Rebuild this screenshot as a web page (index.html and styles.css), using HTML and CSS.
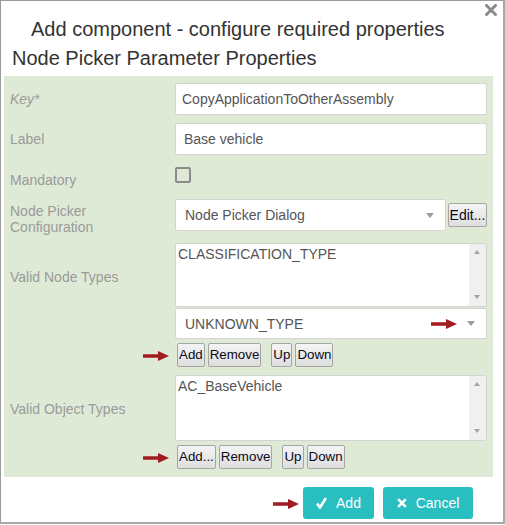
FILE: index.html
```html
<!DOCTYPE html>
<html>
<head>
<meta charset="utf-8">
<link rel="stylesheet" href="styles.css">
</head>
<body>
<div class="dialog">
  <span class="close"><svg width="12" height="12" viewBox="0 0 12 12"><path d="M1.5 1.5 L10.5 10.5 M10.5 1.5 L1.5 10.5" stroke="#8a8a8a" stroke-width="3" stroke-linecap="square"/></svg></span>
  <h2 class="title">Add component - configure required properties</h2>
  <h3 class="subtitle">Node Picker Parameter Properties</h3>
  <div class="panel">
    <div class="row">
      <div class="lbl key">Key*</div>
      <div class="input">CopyApplicationToOtherAssembly</div>
    </div>
    <div class="row">
      <div class="lbl">Label</div>
      <div class="input pad">Base vehicle</div>
    </div>
    <div class="row row-check">
      <div class="lbl">Mandatory</div>
      <div class="ctl"><span class="checkbox"></span></div>
    </div>
    <div class="row row-picker">
      <div class="lbl">Node Picker<br>Configuration</div>
      <div class="ctl picker">
        <div class="select small"><span>Node Picker Dialog</span><span class="caret"></span></div>
        <button class="btn edit">Edit...</button>
      </div>
    </div>
    <div class="row row-list">
      <div class="lbl lbl-list">Valid Node Types</div>
      <div class="ctl">
        <div class="textarea t1"><span class="ta-text">CLASSIFICATION_TYPE</span><span class="sb"><span class="up"></span><span class="down"></span></span></div>
        <div class="select wide"><span>UNKNOWN_TYPE</span><span class="marker m-select"><svg width="26" height="10" viewBox="0 0 26 10"><path d="M0 3.2 H15 V0 L26 5 L15 10 V6.8 H0 Z" fill="#a11c1f"/></svg></span><span class="caret"></span></div>
        <div class="btnrow">
          <span class="marker m-left"><svg width="26" height="10" viewBox="0 0 26 10"><path d="M0 3.2 H15 V0 L26 5 L15 10 V6.8 H0 Z" fill="#a11c1f"/></svg></span>
          <button class="btn">Add</button><button class="btn">Remove</button><button class="btn sep">Up</button><button class="btn">Down</button>
        </div>
      </div>
    </div>
    <div class="row row-list last">
      <div class="lbl lbl-list">Valid Object Types</div>
      <div class="ctl">
        <div class="textarea t2"><span class="ta-text">AC_BaseVehicle</span><span class="sb"><span class="up"></span><span class="down"></span></span></div>
        <div class="btnrow">
          <span class="marker m-left"><svg width="26" height="10" viewBox="0 0 26 10"><path d="M0 3.2 H15 V0 L26 5 L15 10 V6.8 H0 Z" fill="#a11c1f"/></svg></span>
          <button class="btn">Add...</button><button class="btn">Remove</button><button class="btn sep">Up</button><button class="btn">Down</button>
        </div>
      </div>
    </div>
  </div>
  <div class="footer">
    <span class="marker m-foot"><svg width="26" height="10" viewBox="0 0 26 10"><path d="M0 3.2 H15 V0 L26 5 L15 10 V6.8 H0 Z" fill="#a11c1f"/></svg></span>
    <button class="fbtn add"><svg width="11" height="12" viewBox="0 0 11 12"><path d="M1 6.5 L4 10.5 L10 1" fill="none" stroke="#fff" stroke-width="2.6"/></svg>Add</button>
    <button class="fbtn cancel"><svg width="10" height="10" viewBox="0 0 10 10"><path d="M1.2 1.2 L8.8 8.8 M8.8 1.2 L1.2 8.8" stroke="#fff" stroke-width="2.6"/></svg>Cancel</button>
  </div>
</div>
</body>
</html>
```
FILE: styles.css
```css
html, body {
  margin: 0;
  padding: 0;
  background: #fff;
}
body {
  font-family: "Liberation Sans", Arial, sans-serif;
}
.dialog {
  position: relative;
  width: 502px;
  height: 521px;
  border: 1px solid #9a9a9a;
  border-right-width: 2px;
  border-bottom-width: 2px;
  border-right-color: #a8a8a8;
  border-bottom-color: #a8a8a8;
  background: #fff;
}
.close {
  position: absolute;
  right: 6px;
  top: 3px;
  width: 12px;
  height: 12px;
  line-height: 0;
}
.title {
  margin: 16px 0 0 30px;
  font-size: 20px;
  line-height: 24px;
  font-weight: normal;
  color: #333;
}
.subtitle {
  margin: 5px 0 0 11px;
  font-size: 20px;
  line-height: 24px;
  font-weight: normal;
  color: #333;
}
.panel {
  margin: 6px 0 0 3px;
  width: 477px;
  height: 386px;
  padding: 7px 6px 8px 6px;
  background: #dfead6;
}
.row {
  display: grid;
  grid-template-columns: 165px 1fr;
  margin-bottom: 8px;
}
.row.last { margin-bottom: 0; }
.lbl {
  align-self: center;
  font-size: 14px;
  line-height: 16px;
  color: #9a9a9a;
}
.lbl.key { font-style: italic; }
.lbl.lbl-list {
  align-self: start;
  padding-top: 26px;
}
.input {
  box-sizing: border-box;
  height: 32px;
  border: 1px solid #d4d4d4;
  border-radius: 2px;
  background: #fff;
  font-size: 14px;
  line-height: 30px;
  color: #555;
  padding-left: 6px;
}
.input.pad { padding-left: 8px; }
.row-check { height: 32px; margin-bottom: 4px; }
.row-check .lbl { padding-top: 1px; }
.ctl { min-width: 0; }
.checkbox {
  display: block;
  margin-top: 4px;
  width: 12px;
  height: 12px;
  border: 2px solid #8c8c8c;
  border-radius: 2px;
}
.row-picker { height: 40px; margin-bottom: 4px; }
.picker {
  display: flex;
  align-items: flex-start;
}
.select {
  position: relative;
  box-sizing: border-box;
  display: flex;
  align-items: center;
  justify-content: space-between;
  background: #fff;
  border: 1px solid #d4d4d4;
  border-radius: 2px;
  font-size: 14px;
  color: #555;
  padding-left: 9px;
  padding-right: 11px;
}
.select.small {
  width: 271px;
  height: 32px;
}
.select.wide {
  height: 31px;
  margin-top: 1px;
}
.caret {
  width: 0;
  height: 0;
  border-left: 4.5px solid transparent;
  border-right: 4.5px solid transparent;
  border-top: 5px solid #9c9c9c;
}
.btn {
  box-sizing: border-box;
  height: 24px;
  padding: 0 1px;
  margin: 0 3px 0 0;
  border: 1px solid #a5a5a5;
  border-radius: 2px;
  background: linear-gradient(#f4f4f4, #dedede);
  font-family: "Liberation Sans", Arial, sans-serif;
  font-size: 13.333px;
  line-height: 22px;
  color: #0a0a1a;
}
.btn.edit {
  margin: 4px 0 0 2px;
  width: 39px;
  padding: 0;
  font-size: 14px;
}
.textarea {
  position: relative;
  box-sizing: border-box;
  background: #fff;
  border: 1px solid #d4d4d4;
  border-radius: 2px;
  font-size: 14px;
  color: #555;
}
.t1 { height: 64px; }
.t2 { height: 66px; }
.ta-text {
  display: block;
  padding: 2px 0 0 2px;
  line-height: 17px;
}
.sb {
  position: absolute;
  right: 0;
  top: 0;
  bottom: 0;
  width: 17px;
  background: #f0f0f0;
}
.sb .up, .sb .down {
  position: absolute;
  left: 5px;
  width: 0;
  height: 0;
  border-left: 3.5px solid transparent;
  border-right: 3.5px solid transparent;
}
.sb .up { top: 6px; border-bottom: 4px solid #a3a3a3; }
.sb .down { bottom: 7px; border-top: 4px solid #a3a3a3; }
.btnrow {
  position: relative;
  display: flex;
  margin-top: 4px;
  padding-left: 2px;
}
.btn.sep { margin-left: 7px; }
.marker {
  position: absolute;
  line-height: 0;
}
.m-left { left: -32px; top: 8px; }
.m-select { right: 29px; top: 10px; }
.footer {
  position: relative;
  display: flex;
  justify-content: flex-end;
  margin-top: 10px;
  padding-right: 30px;
}
.m-foot { left: 272px; top: 12px; }
.fbtn {
  display: flex;
  align-items: center;
  justify-content: center;
  height: 32px;
  border: none;
  border-radius: 3px;
  background: #29bebf;
  color: #fff;
  font-family: "Liberation Sans", Arial, sans-serif;
  font-size: 14px;
  padding: 0;
}
.fbtn svg { margin-right: 9px; }
.fbtn.add { width: 71px; margin-right: 9px; }
.fbtn.cancel { width: 90px; }
```
